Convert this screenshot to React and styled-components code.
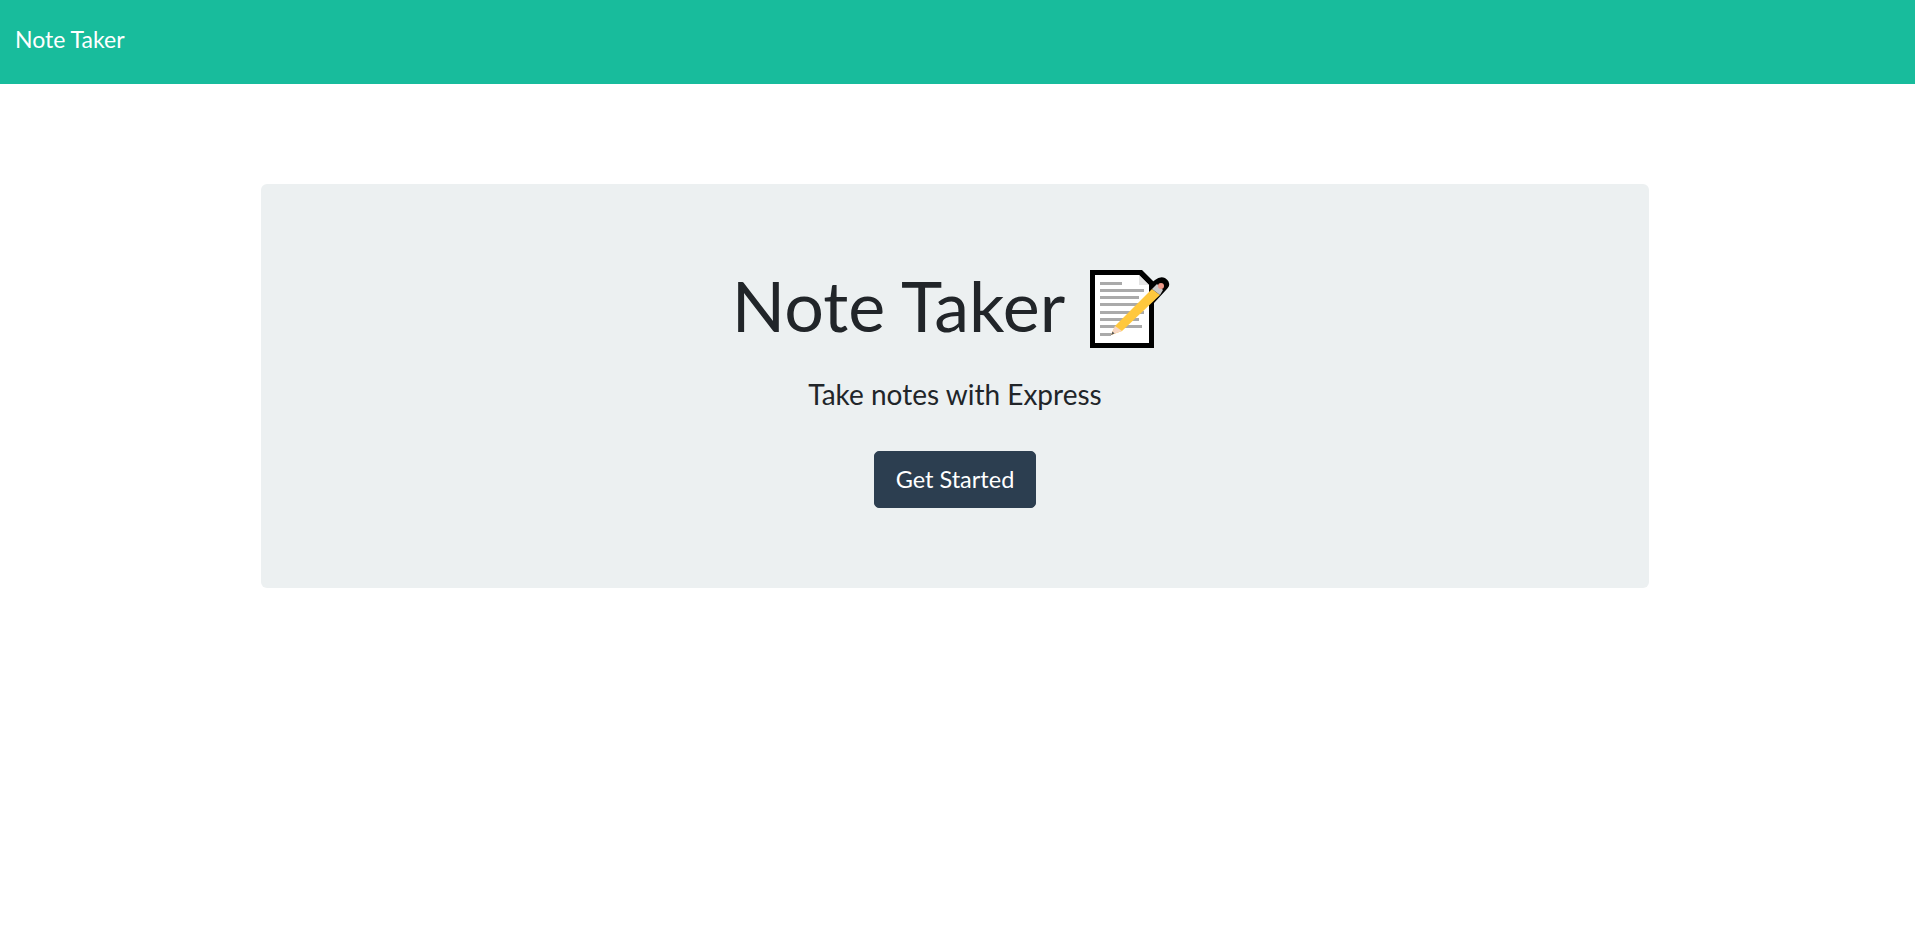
import React from 'react'
import styled, { createGlobalStyle } from 'styled-components'

const GlobalStyle = createGlobalStyle`
  body {
    margin: 0;
    background: #fff;
    color: #212529;
    font-family: "Lato", "Liberation Sans", sans-serif;
  }
`

const Navbar = styled.nav`
  display: flex;
  align-items: center;
  height: 84px;
  padding: 0 0 7px 15px;
  box-sizing: border-box;
  background: #18bc9c;
`

const Brand = styled.a`
  color: #fff;
  font-size: 23px;
  text-decoration: none;
  cursor: pointer;
`

const Main = styled.main`
  width: 1388px;
  margin: 100px 0 0 261px;
`

const Jumbotron = styled.section`
  display: flex;
  flex-direction: column;
  align-items: center;
  height: 404px;
  box-sizing: border-box;
  padding-top: 67px;
  background: #ecf0f1;
  border-radius: 6px;
`

const Title = styled.h1`
  display: flex;
  align-items: center;
  margin: 0;
  height: 108px;
  font-size: 70px;
  font-weight: 400;
  line-height: 108px;
`

const Emoji = styled.svg`
  width: 90px;
  height: 90px;
  margin-left: 23px;
  margin-top: 11px;
  flex: none;
`

const Lead = styled.p`
  margin: 15px 0 0;
  font-size: 28px;
  font-weight: 400;
  line-height: 40px;
`

const StartButton = styled.button`
  margin-top: 37px;
  width: 162px;
  height: 57px;
  padding: 0 0 2px;
  background: #2c3e50;
  border: 1px solid #2c3e50;
  border-radius: 5px;
  color: #fff;
  font-family: inherit;
  font-size: 23.5px;
  cursor: pointer;
`

function MemoEmoji() {
  return (
    <Emoji viewBox="18 15 90 90" aria-hidden="true">
      <path d="M20 19H72L84 31V97H20Z" fill="#000" />
      <path d="M25 24H69L79 34V92H25Z" fill="#fff" />
      <path d="M69 24L79 34H69Z" fill="#e4e4e4" />
      <g fill="#aaa">
        <rect x="30" y="31" width="22" height="3" />
        <rect x="30" y="38" width="44" height="3" />
        <rect x="30" y="45" width="39" height="3" />
        <rect x="30" y="52" width="39" height="3" />
        <rect x="30" y="60" width="44" height="3" />
        <rect x="30" y="67" width="39" height="3" />
        <rect x="30" y="74" width="42" height="3" />
        <rect x="30" y="82" width="11" height="3" />
      </g>
      <path d="M80 33L85 29Q90 25 95 27Q100 30 99 35Q98 37 96 39L84 52V42Z" fill="#000" />
      <path d="M45 75L82 38L90 44L52 80L41 84Z" fill="#ffc83d" />
      <path d="M45 75L52 80L41 84Z" fill="#f7d7c4" />
      <path d="M42.5 80.5L44.5 82.5L41 84Z" fill="#555" />
      <path d="M82 38L87 33L93 39L90 44Z" fill="#c8c8c8" />
      <circle cx="91" cy="35" r="3" fill="#ef9a8a" />
    </Emoji>
  )
}

export default function App() {
  return (
    <>
      <GlobalStyle />
      <Navbar>
        <Brand>Note Taker</Brand>
      </Navbar>
      <Main>
        <Jumbotron>
          <Title>
            Note Taker
            <MemoEmoji />
          </Title>
          <Lead>Take notes with Express</Lead>
          <StartButton>Get Started</StartButton>
        </Jumbotron>
      </Main>
    </>
  )
}
